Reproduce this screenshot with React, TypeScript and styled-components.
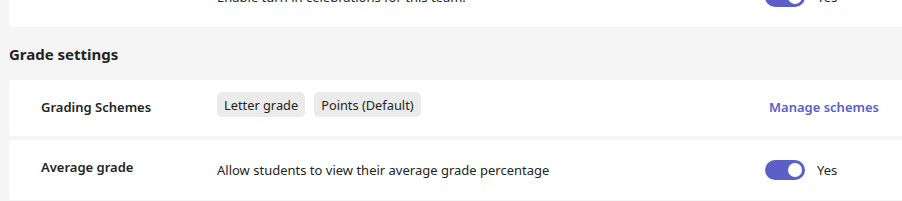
import React from 'react';
import styled, { createGlobalStyle } from 'styled-components';

const GlobalStyle = createGlobalStyle`
  html, body {
    margin: 0;
    padding: 0;
    background: #f5f5f5;
    overflow: hidden;
  }
  body {
    font-family: "Noto Sans", "Open Sans", sans-serif;
    color: #242424;
  }
`;

const Page = styled.div`
  display: flex;
  flex-direction: column;
  gap: 4px;
  margin-top: -33px;
  padding-left: 9px;
`;

const Card = styled.div<{ height: number }>`
  display: flex;
  align-items: center;
  height: ${p => p.height}px;
  box-sizing: border-box;
  background: #ffffff;
  border-radius: 4px 0 0 4px;
  padding: 0 23px 0 32px;
`;

const TopCard = styled(Card)`
  align-items: flex-start;
  padding-top: 12px;
`;

const SectionTitle = styled.h2`
  margin: 13px 0 12px;
  font-size: 15px;
  line-height: 20px;
  font-weight: 700;
  color: #242424;
`;

const Label = styled.div<{ lift?: number }>`
  width: 176px;
  flex-shrink: 0;
  font-size: 13px;
  line-height: 20px;
  font-weight: 600;
  margin-bottom: ${p => p.lift ?? 0}px;
`;

const TopLabel = styled(Label)`
  margin-top: 5px;
`;

const Description = styled.div`
  flex: 1;
  font-size: 13px;
  line-height: 20px;
`;

const Chips = styled.div`
  flex: 1;
  display: flex;
  gap: 9px;
`;

const Chip = styled.span`
  display: inline-flex;
  align-items: center;
  height: 25px;
  padding: 0 7px;
  box-sizing: border-box;
  border-radius: 5px;
  background: #ebebeb;
  font-size: 12.8px;
  color: #242424;
`;

const Action = styled.div`
  width: 114px;
  flex-shrink: 0;
  display: flex;
  align-items: center;
  gap: 12px;
`;

const LinkAction = styled(Action)`
  justify-content: flex-end;
  margin-top: 5px;
`;

const ManageLink = styled.a`
  font-size: 13px;
  line-height: 20px;
  font-weight: 600;
  color: #5b5fc7;
  text-decoration: none;
  white-space: nowrap;
  cursor: pointer;
`;

const Track = styled.span<{ on: boolean }>`
  position: relative;
  display: inline-block;
  width: 40px;
  height: 20px;
  border-radius: 10px;
  background: ${p => (p.on ? '#5b5fc7' : '#ffffff')};
  flex-shrink: 0;
`;

const Thumb = styled.span<{ on: boolean }>`
  position: absolute;
  top: 3px;
  left: ${p => (p.on ? '23px' : '3px')};
  width: 14px;
  height: 14px;
  border-radius: 50%;
  background: #ffffff;
`;

const ToggleText = styled.span`
  font-size: 13px;
  line-height: 20px;
`;

const Toggle: React.FC<{ on: boolean }> = ({ on }) => (
  <Action>
    <Track on={on}>
      <Thumb on={on} />
    </Track>
    <ToggleText>{on ? 'Yes' : 'No'}</ToggleText>
  </Action>
);

export default function App() {
  return (
    <>
      <GlobalStyle />
      <Page>
        <Card height={60}>
          <Label lift={6}>Celebrations</Label>
          <Description>Enable turn in celebrations for this team.</Description>
          <Toggle on />
        </Card>

        <SectionTitle>Grade settings</SectionTitle>

        <TopCard height={56}>
          <TopLabel>Grading Schemes</TopLabel>
          <Chips>
            <Chip>Letter grade</Chip>
            <Chip>Points (Default)</Chip>
          </Chips>
          <LinkAction>
            <ManageLink>Manage schemes</ManageLink>
          </LinkAction>
        </TopCard>

        <Card height={60}>
          <Label lift={6}>Average grade</Label>
          <Description>Allow students to view their average grade percentage</Description>
          <Toggle on />
        </Card>
      </Page>
    </>
  );
}
